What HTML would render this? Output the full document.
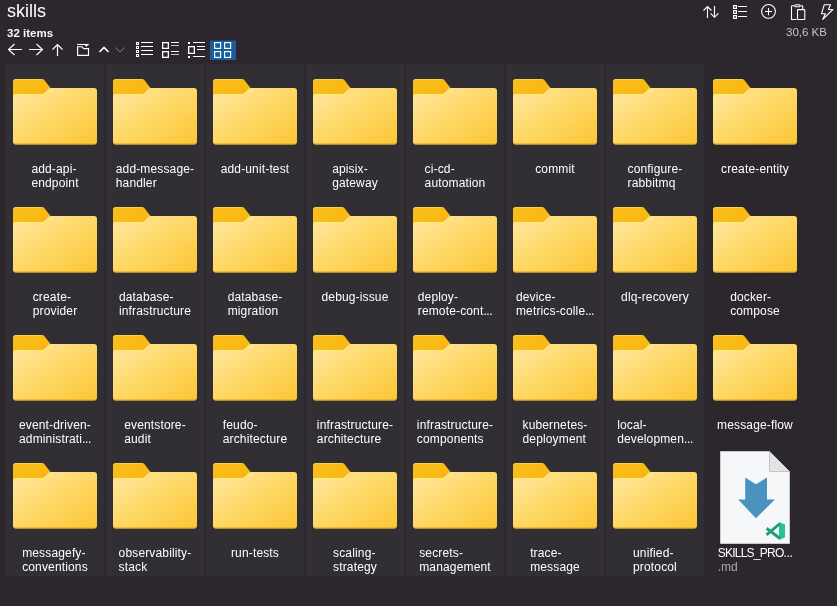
<!DOCTYPE html>
<html><head><meta charset="utf-8"><style>
html,body{margin:0;padding:0;}
body{width:837px;height:606px;background:#2c272d;position:relative;overflow:hidden;font-family:"Liberation Sans",sans-serif;color:#fff;}
.title{will-change:transform;position:absolute;left:7px;top:0px;font-size:18px;line-height:22px;color:#fff;}
.count{will-change:transform;position:absolute;left:7px;top:26.5px;font-size:11.5px;line-height:13px;font-weight:bold;color:#f8f8f8;letter-spacing:0;}
.size{will-change:transform;position:absolute;right:10px;top:26px;font-size:11.5px;line-height:13px;color:#c4c4c4;}
.t{position:absolute;width:98px;height:128px;background:#322f34;}
.t .ic{position:absolute;left:7px;top:15px;}
.lb{position:absolute;left:0;top:98px;width:98px;text-align:center;}
.lb{will-change:transform;}
.lb span{display:inline-block;vertical-align:top;text-align:left;font-size:12px;line-height:14px;color:#fff;letter-spacing:0.15px;}
svg.tb{position:absolute;left:0;top:0;}
i.el{font-style:normal;letter-spacing:-0.4px;}
.lb span.sk{letter-spacing:-0.75px;}
b.ext{font-weight:normal;color:#a9a9a9;letter-spacing:0;}
</style></head><body>
<svg width="0" height="0" style="position:absolute">
<defs>
<linearGradient id="gtab" x1="0" y1="0" x2="1" y2="0.6"><stop offset="0" stop-color="#fbbf18"/><stop offset="1" stop-color="#f8b712"/></linearGradient>
<linearGradient id="gfront" x1="0" y1="0" x2="1" y2="1"><stop offset="0" stop-color="#ffe9a4"/><stop offset="0.5" stop-color="#fed865"/><stop offset="1" stop-color="#fcc536"/></linearGradient>
<symbol id="folder" viewBox="0 0 84 66">
<path d="M0,3 Q0,0 3,0 H28.8 Q30.6,0 31.7,1.4 L37.5,9 V20 H0 Z" fill="url(#gtab)"/>
<path d="M0.5,3 Q0.5,0.6 3,0.6 H29" stroke="#ffd45a" stroke-width="1" fill="none" opacity="0.8"/>
<path d="M0,17.5 Q0,15 2.5,15 H28 Q30.5,15 32,13.5 L35.3,10 Q36.3,9 38,9 H81 Q84,9 84,12 V62.5 Q84,65.5 81,65.5 H3 Q0,65.5 0,62.5 Z" fill="url(#gfront)"/>
<path d="M1.2,64.9 H82.8" stroke="#e3a61c" stroke-width="1" opacity="0.9"/>
</symbol>
<symbol id="mdfile" viewBox="0 0 84 96">
<path d="M7.5,1.5 H56.5 L76.5,21.5 V93.5 H7.5 Z" fill="#f6f7f9" stroke="#c9c9cb" stroke-width="1"/>
<path d="M56.5,1.5 V21.5 H76.5 Z" fill="#e4e4e6" stroke="#c4c4c6" stroke-width="1" stroke-linejoin="round"/>
<path d="M32.2,27.6 L42.9,34.2 L54,27.6 V49.6 H61.9 L42.9,68.2 L25.2,49.6 H32.2 Z" fill="#4b93be"/>
<path d="M66,72 L72,74.4 V87.6 L66,90 Z" fill="#2bbf9b"/>
<path d="M65.6,74.8 L54.6,84" stroke="#1d9e78" stroke-width="2.8" stroke-linecap="square"/>
<path d="M54.8,79.2 L65.6,87.4" stroke="#1fa27c" stroke-width="3" stroke-linecap="square"/>
</symbol>
</defs></svg>
<div class="title">skills</div>
<div class="count">32 items</div>
<div class="size">30,6 KB</div>
<svg class="tb" width="837" height="64" viewBox="0 0 837 64" fill="none" stroke="#fff" stroke-width="1">
<!-- back -->
<path d="M22,49.5 H8.5 M14.5,44 L8.5,49.5 L14.5,55" stroke-width="1.15"/>
<!-- forward -->
<path d="M29,49.5 H42.5 M36.5,44 L42.5,49.5 L36.5,55" stroke-width="1.15"/>
<!-- up -->
<path d="M57.5,56 V44.5 M52.5,49.5 L57.5,44.5 L62.5,49.5" stroke-width="1.15"/>
<!-- folder/new -->
<path d="M77.2,44.5 H88.8" stroke-width="1.1"/><path d="M84.8,44.8 H88 L86.6,46.8 H86.2 Z" fill="#fff" stroke="none"/>
<path d="M77.6,46.7 H81.6 Q82.2,46.7 82.6,47.4 L83,48 Q83.4,48.6 84,48.6 H88.5 V55.4 H77.6 Z" stroke-width="1.15"/>
<!-- caret up/down -->
<path d="M99.5,52 L104,47.5 L108.5,52" stroke-width="1.6"/>
<path d="M115.3,47.6 L120,52 L124.7,47.6" stroke="#807d83" stroke-width="1"/>
<!-- list view -->
<g stroke-width="1">
<rect x="136.5" y="42.5" width="2" height="2"/><rect x="136.5" y="46.5" width="2" height="2"/><rect x="136.5" y="50.5" width="2" height="2"/><rect x="136.5" y="54.5" width="2" height="2"/>
<path d="M141,42.5 H153 M141,46.5 H153 M141,50.5 H153 M141,54.5 H153"/>
</g>
<!-- details view -->
<g stroke-width="1.3">
<rect x="162.65" y="42.65" width="5.7" height="5.7"/><rect x="162.65" y="51.65" width="5.7" height="5.7"/>
</g>
<path d="M171,42.5 H179 M171,51.5 H179"/>
<path d="M171,45.5 H179 M171,54.5 H179" stroke="#c8c8c8"/>
<!-- tiles view -->
<g stroke-width="1.1">
<rect x="188" y="42" width="2" height="2" fill="#fff" stroke="none"/><rect x="188" y="56" width="2" height="2" fill="#fff" stroke="none"/>
<rect x="188.65" y="46.65" width="5.7" height="6.7" stroke-width="1.3"/>
<path d="M193,42.5 H205 M197,46.5 H205 M197,49.5 H205 M193,56.5 H205"/>
</g>
<!-- grid selected -->
<rect x="210" y="40.5" width="26" height="19.5" fill="#1b5c9b" stroke="none"/>
<g stroke="#e6fbff" stroke-width="1.2">
<rect x="214.6" y="42.6" width="6" height="5.8"/><rect x="224.6" y="42.6" width="6" height="5.8"/>
<rect x="214.6" y="51.6" width="6" height="5.8"/><rect x="224.6" y="51.6" width="6" height="5.8"/>
</g>
<!-- top right: sort -->
<path d="M707.5,18 V6.5 M703.5,10.5 L707.5,6.5 L711.5,10.5 M714.5,6 V17.3 M710.6,13.4 L714.5,17.3 L718.4,13.4" stroke-width="1.1"/>
<!-- list -->
<g stroke-width="1">
<rect x="733.6" y="5.6" width="2.8" height="2.8" stroke-width="1.2"/><rect x="733.6" y="10.6" width="2.8" height="2.8" stroke-width="1.2"/><rect x="733.6" y="15.6" width="2.8" height="2.8" stroke-width="1.2"/>
<path d="M738,6.5 H747 M738,11.5 H747 M738,16.5 H747"/>
</g>
<!-- add -->
<circle cx="768.5" cy="11.4" r="6.9" stroke-width="1.1"/>
<path d="M768.5,8 V15.2 M765,11.5 H772" stroke-width="1.05"/>
<!-- clipboard -->
<path d="M796.5,19.5 H791.5 V6.5 Q791.5,5.8 792.3,5.8 H794.5 M800.5,5.8 H802 Q802.7,5.8 802.7,6.5 V9.5" stroke-width="1.1"/>
<rect x="794.8" y="4.7" width="5.3" height="2" rx="1" stroke-width="1.1"/>
<rect x="797.5" y="9.6" width="7.3" height="9.9" rx="0.6" stroke-width="1.1"/>
<!-- flash -->
<path d="M824.2,4.8 H830.6 L828.4,9.5 H832.8 L822.8,19.3 L825.4,13.8 H821.5 Z" stroke-width="1.1" stroke-linejoin="round"/>
</svg>
<div class="t" style="left:6px;top:64px"><svg class="ic" width="84" height="66" viewBox="0 0 84 66"><use href="#folder"/></svg><div class="lb"><span>add-api-<br>endpoint</span></div></div>
<div class="t" style="left:106px;top:64px"><svg class="ic" width="84" height="66" viewBox="0 0 84 66"><use href="#folder"/></svg><div class="lb"><span>add-message-<br>handler</span></div></div>
<div class="t" style="left:206px;top:64px"><svg class="ic" width="84" height="66" viewBox="0 0 84 66"><use href="#folder"/></svg><div class="lb"><span>add-unit-test</span></div></div>
<div class="t" style="left:306px;top:64px"><svg class="ic" width="84" height="66" viewBox="0 0 84 66"><use href="#folder"/></svg><div class="lb"><span>apisix-<br>gateway</span></div></div>
<div class="t" style="left:406px;top:64px"><svg class="ic" width="84" height="66" viewBox="0 0 84 66"><use href="#folder"/></svg><div class="lb"><span>ci-cd-<br>automation</span></div></div>
<div class="t" style="left:506px;top:64px"><svg class="ic" width="84" height="66" viewBox="0 0 84 66"><use href="#folder"/></svg><div class="lb"><span>commit</span></div></div>
<div class="t" style="left:606px;top:64px"><svg class="ic" width="84" height="66" viewBox="0 0 84 66"><use href="#folder"/></svg><div class="lb"><span>configure-<br>rabbitmq</span></div></div>
<div class="t" style="left:706px;top:64px;background:none"><svg class="ic" width="84" height="66" viewBox="0 0 84 66"><use href="#folder"/></svg><div class="lb"><span>create-entity</span></div></div>
<div class="t" style="left:6px;top:192px"><svg class="ic" width="84" height="66" viewBox="0 0 84 66"><use href="#folder"/></svg><div class="lb"><span>create-<br>provider</span></div></div>
<div class="t" style="left:106px;top:192px"><svg class="ic" width="84" height="66" viewBox="0 0 84 66"><use href="#folder"/></svg><div class="lb"><span>database-<br>infrastructure</span></div></div>
<div class="t" style="left:206px;top:192px"><svg class="ic" width="84" height="66" viewBox="0 0 84 66"><use href="#folder"/></svg><div class="lb"><span>database-<br>migration</span></div></div>
<div class="t" style="left:306px;top:192px"><svg class="ic" width="84" height="66" viewBox="0 0 84 66"><use href="#folder"/></svg><div class="lb"><span>debug-issue</span></div></div>
<div class="t" style="left:406px;top:192px"><svg class="ic" width="84" height="66" viewBox="0 0 84 66"><use href="#folder"/></svg><div class="lb"><span>deploy-<br>remote-cont<i class="el">...</i></span></div></div>
<div class="t" style="left:506px;top:192px"><svg class="ic" width="84" height="66" viewBox="0 0 84 66"><use href="#folder"/></svg><div class="lb"><span>device-<br>metrics-colle<i class="el">...</i></span></div></div>
<div class="t" style="left:606px;top:192px"><svg class="ic" width="84" height="66" viewBox="0 0 84 66"><use href="#folder"/></svg><div class="lb"><span>dlq-recovery</span></div></div>
<div class="t" style="left:706px;top:192px;background:none"><svg class="ic" width="84" height="66" viewBox="0 0 84 66"><use href="#folder"/></svg><div class="lb"><span>docker-<br>compose</span></div></div>
<div class="t" style="left:6px;top:320px"><svg class="ic" width="84" height="66" viewBox="0 0 84 66"><use href="#folder"/></svg><div class="lb"><span>event-driven-<br>administrati<i class="el">...</i></span></div></div>
<div class="t" style="left:106px;top:320px"><svg class="ic" width="84" height="66" viewBox="0 0 84 66"><use href="#folder"/></svg><div class="lb"><span>eventstore-<br>audit</span></div></div>
<div class="t" style="left:206px;top:320px"><svg class="ic" width="84" height="66" viewBox="0 0 84 66"><use href="#folder"/></svg><div class="lb"><span>feudo-<br>architecture</span></div></div>
<div class="t" style="left:306px;top:320px"><svg class="ic" width="84" height="66" viewBox="0 0 84 66"><use href="#folder"/></svg><div class="lb"><span>infrastructure-<br>architecture</span></div></div>
<div class="t" style="left:406px;top:320px"><svg class="ic" width="84" height="66" viewBox="0 0 84 66"><use href="#folder"/></svg><div class="lb"><span>infrastructure-<br>components</span></div></div>
<div class="t" style="left:506px;top:320px"><svg class="ic" width="84" height="66" viewBox="0 0 84 66"><use href="#folder"/></svg><div class="lb"><span>kubernetes-<br>deployment</span></div></div>
<div class="t" style="left:606px;top:320px"><svg class="ic" width="84" height="66" viewBox="0 0 84 66"><use href="#folder"/></svg><div class="lb"><span>local-<br>developmen<i class="el">...</i></span></div></div>
<div class="t" style="left:706px;top:320px;background:none"><svg class="ic" width="84" height="66" viewBox="0 0 84 66"><use href="#folder"/></svg><div class="lb"><span>message-flow</span></div></div>
<div class="t" style="left:6px;top:448px"><svg class="ic" width="84" height="66" viewBox="0 0 84 66"><use href="#folder"/></svg><div class="lb"><span>messagefy-<br>conventions</span></div></div>
<div class="t" style="left:106px;top:448px"><svg class="ic" width="84" height="66" viewBox="0 0 84 66"><use href="#folder"/></svg><div class="lb"><span>observability-<br>stack</span></div></div>
<div class="t" style="left:206px;top:448px"><svg class="ic" width="84" height="66" viewBox="0 0 84 66"><use href="#folder"/></svg><div class="lb"><span>run-tests</span></div></div>
<div class="t" style="left:306px;top:448px"><svg class="ic" width="84" height="66" viewBox="0 0 84 66"><use href="#folder"/></svg><div class="lb"><span>scaling-<br>strategy</span></div></div>
<div class="t" style="left:406px;top:448px"><svg class="ic" width="84" height="66" viewBox="0 0 84 66"><use href="#folder"/></svg><div class="lb"><span>secrets-<br>management</span></div></div>
<div class="t" style="left:506px;top:448px"><svg class="ic" width="84" height="66" viewBox="0 0 84 66"><use href="#folder"/></svg><div class="lb"><span>trace-<br>message</span></div></div>
<div class="t" style="left:606px;top:448px"><svg class="ic" width="84" height="66" viewBox="0 0 84 66"><use href="#folder"/></svg><div class="lb"><span>unified-<br>protocol</span></div></div>
<div class="t" style="left:706px;top:448px;background:none"><svg class="ic" style="top:2px" width="84" height="96" viewBox="0 0 84 96"><use href="#mdfile"/></svg><div class="lb"><span class="sk">SKILLS_PRO<i class="el">...</i><br><b class="ext">.md</b></span></div></div>
</body></html>
